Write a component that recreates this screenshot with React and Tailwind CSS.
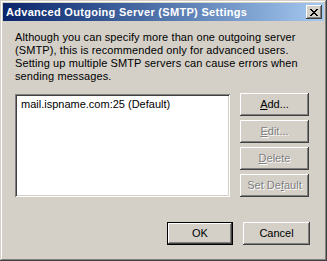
import React from 'react'

const raised = 'shadow-[inset_-1px_-1px_#404040,inset_1px_1px_#ffffff,inset_-2px_-2px_#808080,inset_2px_2px_#d4d0c8]'

function CloseGlyph() {
  const rows = ['11000011', '01100110', '00111100', '00011000', '00111100', '01100110', '11000011']
  return (
    <svg width="8" height="7" viewBox="0 0 8 7" shapeRendering="crispEdges">
      {rows.flatMap((r, y) =>
        r.split('').map((c, x) => (c === '1' ? <rect key={`${x}-${y}`} x={x} y={y} width="1" height="1" fill="#000" /> : null))
      )}
    </svg>
  )
}

function Button({ children, disabled, isDefault, className = '' }) {
  return (
    <div
      className={`h-[23px] flex items-center justify-center ${isDefault ? 'border border-black' : ''} ${className}`}
    >
      <div className={`w-full h-full flex items-center justify-center ${raised} ${disabled ? 'text-[#808080] [text-shadow:1px_1px_0_#ffffff]' : 'text-black'}`}>
        {children}
      </div>
    </div>
  )
}

export default function App() {
  return (
    <div
      className="w-[327px] h-[261px] bg-[#d4d0c8] p-[3px] flex flex-col shadow-[inset_-1px_-1px_#404040,inset_1px_1px_#d4d0c8,inset_-2px_-2px_#808080,inset_2px_2px_#ffffff] text-[11px] leading-[13px] text-black"
      style={{ fontFamily: '"Liberation Sans", Arial, sans-serif' }}
    >
      {/* Barre de titre */}
      <div className="h-[18px] flex items-center justify-between pl-[3px] pr-[2px] bg-gradient-to-r from-[#0a246a] to-[#a6caf0]">
        <span className="text-white font-bold tracking-[0.3px]">Advanced Outgoing Server (SMTP) Settings</span>
        <div className={`w-[16px] h-[14px] bg-[#d4d0c8] flex items-center justify-center ${raised}`}>
          <CloseGlyph />
        </div>
      </div>

      <div className="flex-1 flex flex-col px-[12px]">
        <p className="mt-[10px] tracking-[0.1px]">
          Although you can specify more than one outgoing server
          <br />
          (SMTP), this is recommended only for advanced users.
          <br />
          Setting up multiple SMTP servers can cause errors when
          <br />
          sending messages.
        </p>

        <div className="mt-[10px] flex gap-[10px]">
          <div className="mt-[1px] w-[215px] h-[103px] bg-white shadow-[inset_1px_1px_#808080,inset_-1px_-1px_#ffffff,inset_2px_2px_#404040,inset_-2px_-2px_#d4d0c8] px-[6px] py-[4px]">
            mail.ispname.com:25 (Default)
          </div>
          <div className="w-[69px] flex flex-col gap-[4px]">
            <Button><span><u className="underline-offset-1">A</u>dd...</span></Button>
            <Button disabled><span><u className="underline-offset-1">E</u>dit...</span></Button>
            <Button disabled><span><u className="underline-offset-1">D</u>elete</span></Button>
            <Button disabled><span>Set De<u className="underline-offset-1">f</u>ault</span></Button>
          </div>
        </div>

        <div className="mt-[25px] flex justify-end gap-[10px] pr-[2px]">
          <Button isDefault className="w-[66px]">OK</Button>
          <Button className="w-[67px]">Cancel</Button>
        </div>
      </div>
    </div>
  )
}
